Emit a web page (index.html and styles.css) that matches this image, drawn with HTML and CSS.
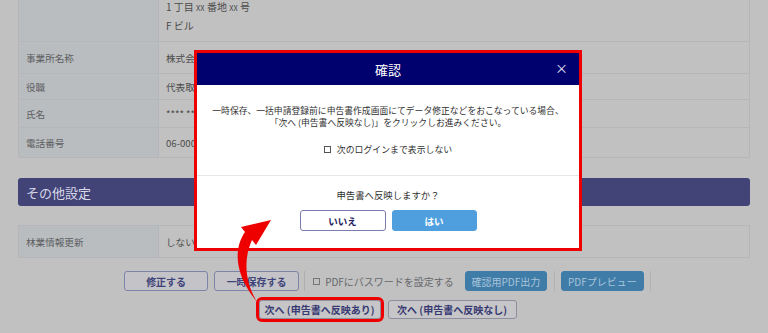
FILE: index.html
```html
<!DOCTYPE html>
<html lang="ja">
<head>
<meta charset="utf-8">
<link rel="stylesheet" href="styles.css">
</head>
<body>
<div class="page">
  <div class="table first">
    <div class="row r1"><div class="lbl"></div><div class="val addr"><div>1 丁目 <span class="sm">XX</span> 番地 <span class="sm">XX</span> 号</div><div>F ビル</div></div></div>
    <div class="row r2"><div class="lbl">事業所名称</div><div class="val">株式会社</div></div>
    <div class="row r3"><div class="lbl">役職</div><div class="val">代表取締役</div></div>
    <div class="row r4"><div class="lbl">氏名</div><div class="val">**** ****</div></div>
    <div class="row r5"><div class="lbl">電話番号</div><div class="val">06-0000-0000</div></div>
  </div>

  <div class="section">その他設定</div>

  <div class="table">
    <div class="row r6"><div class="lbl">林業情報更新</div><div class="val">しない</div></div>
  </div>

  <div class="actions">
    <div class="btnrow">
      <button class="btn">修正する</button>
      <button class="btn">一時保存する</button>
      <span class="sep"></span>
      <label class="pw"><span class="cb"></span>PDFにパスワードを設定する</label>
      <button class="btn blue">確認用PDF出力</button>
      <span class="sep"></span>
      <button class="btn blue">PDFプレビュー</button>
      <span class="sep"></span>
    </div>
    <div class="btnrow second">
      <button class="btn next hl">次へ (申告書へ反映あり)</button>
      <button class="btn next">次へ (申告書へ反映なし)</button>
    </div>
  </div>
</div>

<div class="modal">
  <div class="mhead"><span class="mtitle">確認</span><span class="close">×</span></div>
  <div class="mbody">
    <p class="msg">一時保存、一括申請登録前に申告書作成画面にてデータ修正などをおこなっている場合、<br>「次へ (申告書へ反映なし)」をクリックしお進みください。</p>
    <label class="mcheck"><span class="cb light"></span>次のログインまで表示しない</label>
  </div>
  <div class="mfoot">
    <p class="q">申告書へ反映しますか？</p>
    <div class="mbtns">
      <button class="mb no">いいえ</button>
      <button class="mb yes">はい</button>
    </div>
  </div>
</div>

<svg class="arrow" width="60" height="100" viewBox="0 0 60 100">
  <path d="M46 10 L16 17 L20 22 C10 36 7 62 32 92 C20 72 18 50 27 30 L31 35 Z" fill="#ee0000"/>
</svg>
</body>
</html>
```

FILE: styles.css
```css
* { box-sizing: border-box; }
html, body { margin: 0; padding: 0; }
body {
  width: 768px;
  height: 333px;
  overflow: hidden;
  background: #c1c1c1;
  font-family: "Noto Sans CJK JP", "Noto Sans", sans-serif;
  position: relative;
}
.page {
  padding: 0 18px;
}
.table {
  border: 1px solid #b4b6b9;
  border-top: none;
}
.table.first { margin-top: -2px; }
.row {
  display: grid;
  grid-template-columns: 140px 1fr;
  border-top: 1px solid #b4b6b9;
  font-size: 9.6px;
}
.table.first .r1 { border-top: none; }
.lbl {
  background: #babdc0;
  color: #5c5e62;
  border-right: 1px solid #b4b6b9;
  padding-left: 7px;
  display: flex;
  align-items: center;
}
.val {
  color: #4c4c4c;
  padding-left: 7px;
  display: flex;
  align-items: center;
}
.val.addr {
  flex-direction: column;
  align-items: flex-start;
  justify-content: flex-start;
  line-height: 18px;
  font-size: 10px;
}
.sm { font-size: 7.5px; }
.r1 { height: 43px; }
.r2 { height: 32px; }
.r3 { height: 26px; }
.r4 { height: 28px; }
.r5 { height: 30px; }
.r6 { height: 32px; }

.section {
  margin: 20px 0 19px;
  height: 28px;
  background: #424376;
  border-radius: 3px;
  color: #d8d8e8;
  font-size: 13px;
  padding-left: 8px;
  display: flex;
  align-items: center;
}

.actions {
  padding-left: 7px;
  margin-top: 13px;
  display: flex;
  flex-direction: column;
  gap: 8px;
}
.btnrow {
  display: flex;
  justify-content: center;
  align-items: center;
  height: 20px;
}
.btn {
  font-family: inherit;
  height: 20px;
  padding: 0;
  border-radius: 3px;
  font-size: 10px;
  font-weight: bold;
  color: #3e4379;
  background: #c4c4c8;
  border: 1px solid #7e83a8;
  display: flex;
  align-items: center;
  justify-content: center;
  margin-right: 6px;
}
.btnrow .btn:nth-child(1) { width: 84px; }
.btnrow .btn:nth-child(2) { width: 85px; margin-right: 5px; }
.btn.blue {
  background: #3f7ca8;
  border-color: #3f7ca8;
  color: #a9c4d9;
  font-weight: normal;
  width: 82px;
  margin-right: 7px;
}
.btn.blue + .sep + .btn.blue { width: 83px; margin-right: 6px; }
.sep {
  width: 1px;
  height: 20px;
  background: #b0b0b0;
  margin-right: 6px;
}
.sep:last-child { margin-right: 0; }
.pw {
  display: flex;
  align-items: center;
  font-size: 10px;
  color: #66686c;
  margin-left: 2px;
  margin-right: 11px;
}
.cb {
  width: 7px;
  height: 7px;
  border: 1px solid #777;
  background: transparent;
  margin-right: 5px;
  display: inline-block;
}
.cb.light { border-color: #555; margin-right: 6px; }

.btnrow.second .btn {
  background: #c6c6c8;
  border: 1px solid #8d8f9e;
  color: #363972;
  height: 19px;
}
.btn.next.hl {
  width: 122px;
  margin-right: 7px;
  outline: 3px solid #ee0000;
}
.btnrow.second .btn:nth-child(2) { width: 129px; margin-right: 0; }

/* modal */
.modal {
  position: absolute;
  left: 194px;
  top: 50px;
  width: 388px;
  height: 201px;
  border: 3px solid #ee0000;
  background: #fff;
  display: flex;
  flex-direction: column;
}
.mhead {
  height: 32px;
  background: #00006e;
  color: #fff;
  display: flex;
  align-items: center;
  justify-content: center;
  position: relative;
  flex-shrink: 0;
}
.mtitle { font-size: 13px; }
.close {
  position: absolute;
  right: 11px;
  top: 8px;
  font-size: 13px;
  line-height: 14px;
  color: #e8e8f4;
}
.mbody {
  height: 91px;
  border-bottom: 1px solid #e6e6e6;
  display: flex;
  flex-direction: column;
  align-items: center;
  padding-top: 20px;
  flex-shrink: 0;
}
.msg {
  margin: 0;
  font-size: 8.8px;
  line-height: 12px;
  color: #333;
  text-align: center;
}
.mcheck {
  margin-top: 14px;
  font-size: 8.9px;
  color: #333;
  display: flex;
  align-items: center;
}
.mfoot {
  display: flex;
  flex-direction: column;
  align-items: center;
}
.q {
  margin: 12px 0 0;
  font-size: 9.4px;
  line-height: 14px;
  color: #333;
}
.mbtns {
  margin-top: 8px;
  display: flex;
  gap: 6px;
}
.mb {
  font-family: inherit;
  height: 21px;
  border-radius: 3px;
  font-size: 9.5px;
  font-weight: bold;
  padding: 0;
}
.mb.no {
  width: 86px;
  background: #fff;
  border: 1px solid #7c7cb0;
  color: #1d1d5c;
}
.mb.yes {
  width: 85px;
  background: #4f9fdf;
  border: 1px solid #4f9fdf;
  color: #fff;
}

.arrow {
  position: absolute;
  left: 225px;
  top: 210px;
}
```
